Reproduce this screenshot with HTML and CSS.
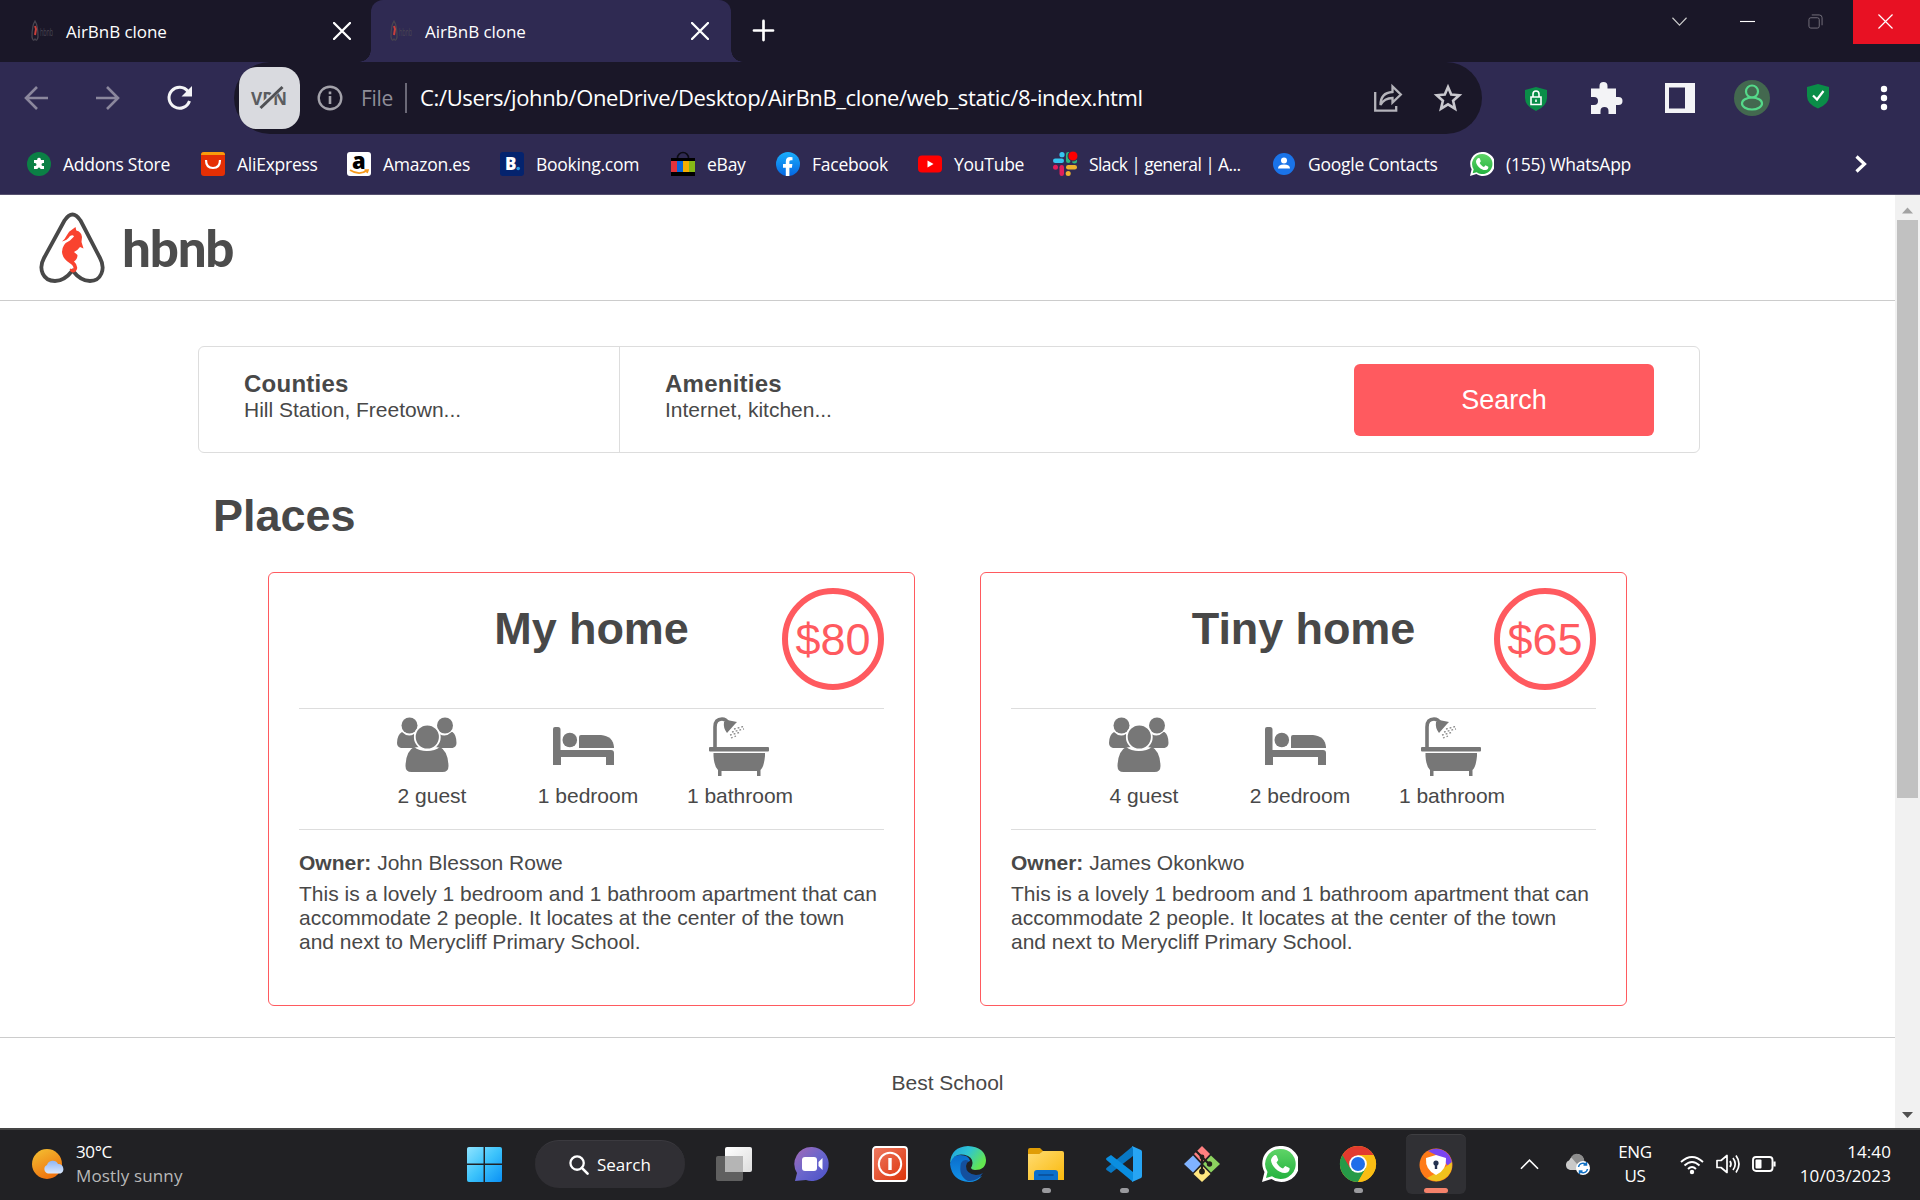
FILE: index.html
```html
<!DOCTYPE html>
<html lang="en">
<head>
<meta charset="utf-8">
<title>AirBnB clone</title>
<link rel="stylesheet" href="styles.css">
</head>
<body>
<svg class="defs" width="0" height="0">
  <defs>
    <linearGradient id="win" x1="0" y1="0" x2="1" y2="1"><stop offset="0" stop-color="#8fe4ff"/><stop offset=".5" stop-color="#3cc3fb"/><stop offset="1" stop-color="#0a90f5"/></linearGradient>
    <linearGradient id="sun" x1=".2" y1="0" x2=".7" y2="1"><stop offset="0" stop-color="#f3bc30"/><stop offset="1" stop-color="#ee6d0c"/></linearGradient>
    <linearGradient id="cloud" x1="0" y1="0" x2="0" y2="1"><stop offset="0" stop-color="#8fb6f5"/><stop offset="1" stop-color="#dbe8fc"/></linearGradient>
    <linearGradient id="sheet" x1="0" y1="0" x2="1" y2="1"><stop offset="0" stop-color="#fff"/><stop offset="1" stop-color="#ddd"/></linearGradient>
    <linearGradient id="chat" x1="0" y1="0" x2="1" y2="1"><stop offset="0" stop-color="#a569b5"/><stop offset=".5" stop-color="#6a66cc"/><stop offset="1" stop-color="#4a50c8"/></linearGradient>
    <linearGradient id="red" x1="0" y1="0" x2="1" y2="1"><stop offset="0" stop-color="#ee7a62"/><stop offset="1" stop-color="#dd3208"/></linearGradient>
    <linearGradient id="edgeTop" x1="0" y1="0" x2="1" y2=".5"><stop offset="0" stop-color="#1d9fe0"/><stop offset=".5" stop-color="#2fc4d2"/><stop offset="1" stop-color="#63e650"/></linearGradient>
    <linearGradient id="edgeBot" x1="0" y1="0" x2="0" y2="1"><stop offset="0" stop-color="#0a6ccb"/><stop offset="1" stop-color="#1292e8"/></linearGradient>
    <linearGradient id="folder" x1="0" y1="0" x2="1" y2="1"><stop offset="0" stop-color="#ffdc72"/><stop offset="1" stop-color="#fab90c"/></linearGradient>
    <linearGradient id="fb" x1="0" y1="0" x2="0" y2="1"><stop offset="0" stop-color="#1aaefc"/><stop offset="1" stop-color="#0566e2"/></linearGradient>
    <linearGradient id="wa" x1="0" y1="0" x2="0" y2="1"><stop offset="0" stop-color="#5fd467"/><stop offset="1" stop-color="#24b23f"/></linearGradient>

    <symbol id="fav" viewBox="0 0 22 22"><path d="M4 1C2 4 1 10 1 17q1 5 3 2q2 3 3-2C7 10 6 4 4 1z" fill="none" stroke="#484550" stroke-width="1.3"/><path d="M4 6l1 3-1 6" stroke="#c9403c" stroke-width="2" fill="none"/><text x="9" y="15.500" font-size="10" textLength="13" lengthAdjust="spacingAndGlyphs" fill="#4a4652">hbnb</text></symbol>
    <symbol id="x" viewBox="0 0 18 18"><path d="M1 1l16 16M17 1L1 17" stroke="#fff" stroke-width="2.300" stroke-linecap="round"/></symbol>
    <symbol id="guests" viewBox="0 0 70 60"><g fill="#777"><circle cx="12.500" cy="8.500" r="8"/><circle cx="48" cy="8.500" r="8"/><path d="M5 15q6 6 12 2 0 8 6 13-4 0-7 1H4q-4-1-4-5 0-8 5-11zM54.500 15q-6 6-12 2 0 8-6 13 4 0 7 1h12q4-1 4-5 0-8-4-11z"/><path d="M17 30q5 4 13 4t13-4q8 4 8.500 19 0 6-6 6h-31q-6 0-6-6Q9 34 17 30z"/></g><circle cx="30.300" cy="20" r="12.500" fill="#777" stroke="#fff" stroke-width="1.800"/></symbol>
    <symbol id="bed" viewBox="0 0 70 60"><g fill="#777"><path d="M0 12q0-2 2-2h3q2.500 0 2.500 2.500V33H58q3 0 3 3v12h-8v-8H8v8H0z"/><circle cx="16.800" cy="23" r="7.300"/><path d="M28 18h20q12 1 13 12v1H26V20q0-2 2-2z"/></g></symbol>
    <symbol id="bath" viewBox="0 0 70 60"><path d="M10 31V10q0-8 7-8 4 0 6 4" fill="none" stroke="#777" stroke-width="3.600"/><g fill="#777"><path d="M19 5l3-2 10 2-2 2-8 9q-4-5-3-11z"/><rect x="4" y="30" width="60" height="4.500" rx="1"/><path d="M8.500 36h51.500v3q-1 11-4.500 14v6h-3.500v-5H16.500v5H13v-6q-4-4-4.500-14z"/></g><path d="M29 12l11-3M27 15l12-3M25 18l11-3M26 21l5-2" stroke="#8a8a8a" stroke-width="1.300" stroke-dasharray="1.800 2"/></symbol>
    <symbol id="whatsapp" viewBox="0 0 36 36"><path d="M18 0A17.500 17.500 0 0 0 2.500 26L0 36l9.500-3A18 18 0 1 0 18 0z" fill="#fff"/><path d="M18 3A15 15 0 0 0 5.500 26L4 32l6-1.800A15 15 0 1 0 18 3z" fill="url(#wa)"/><path d="M12 9.500c2-1 2.500-.5 3.500 2.500l.8 2-1.800 2.500c2 3.500 4 5 6.500 6l2.200-2.500 4.300 2c.5 2-1 5-4.500 5C16 27 9.500 20 9 14.500c0-2 1.500-4 3-5z" fill="#fff"/></symbol>
  </defs>
</svg>

<header class="browser">
  <div class="tabs">
    <div class="tab">
      <svg class="favicon"><use href="#fav"/></svg><span class="tab-title">AirBnB clone</span><svg class="tab-close"><use href="#x"/></svg>
    </div>
    <div class="tab tab-active">
      <svg class="favicon"><use href="#fav"/></svg><span class="tab-title">AirBnB clone</span><svg class="tab-close"><use href="#x"/></svg>
    </div>
    <svg class="new-tab" viewBox="0 0 22 22"><path d="M11 1v20M1 11h20" stroke="#fff" stroke-width="2.800" stroke-linecap="round"/></svg>
    <div class="window-buttons">
      <svg class="win-icon" viewBox="0 0 16 16"><path d="M.5 4L8 12l7.500-8" fill="none" stroke="#ccc" stroke-width="1.200"/></svg>
      <svg class="win-icon" viewBox="0 0 16 16"><path d="M0 8h16" stroke="#fff" stroke-width="1.200"/></svg>
      <svg class="win-icon" viewBox="0 0 16 16"><rect x="1" y="4" width="11" height="11" rx="2" fill="none" stroke="#77747f"/><path d="M4 1h8q3 0 3 3v8" fill="none" stroke="#77747f"/></svg>
      <div class="win-close"><svg class="win-icon" viewBox="0 0 16 16"><path d="M.5.500l15 15M15.500.500l-15 15" stroke="#fff" stroke-width="1.300"/></svg></div>
    </div>
  </div>

  <div class="toolbar">
    <div class="nav">
      <svg viewBox="0 0 24 24"><path d="M24 12H2M13 1L2 12l11 11" fill="none" stroke="#8b879d" stroke-width="2.600"/></svg>
      <svg viewBox="0 0 24 24"><path d="M0 12h22M11 1l11 11-11 11" fill="none" stroke="#8b879d" stroke-width="2.600"/></svg>
      <svg viewBox="0 0 24 24"><path d="M21.500 15A10.500 10.500 0 1 1 20 5.500" fill="none" stroke="#f4f4f6" stroke-width="3"/><path d="M24 0v10.500H13.500z" fill="#f4f4f6"/></svg>
    </div>
    <div class="address">
      <div class="vpn">
        <svg viewBox="0 0 60 62"><text x="11.500" y="37.500" font-size="18" font-weight="700" textLength="36" lengthAdjust="spacingAndGlyphs" fill="#5b5c60">VPN</text><path d="M19 42L42 20" stroke="#d9dadf" stroke-width="5"/><path d="M21 41L43 20" stroke="#505155" stroke-width="3"/></svg>
      </div>
      <svg class="info" viewBox="0 0 26 26"><circle cx="13" cy="13" r="11.300" fill="none" stroke="#a3a2aa" stroke-width="2.400"/><path d="M13 11v8M13 6.500v2.700" stroke="#a3a2aa" stroke-width="2.600"/></svg>
      <span class="scheme">File</span>
      <span class="bar"></span>
      <span class="url">C:/Users/johnb/OneDrive/Desktop/AirBnB_clone/web_static/8-index.html</span>
      <svg class="share" viewBox="0 0 28 28"><path d="M1.200 8v18.600h21V22M6.500 21c0-8 4-12.500 12-13V2.500l8.300 8-8.300 8V14c-5 0-9 1.500-12 7z" fill="none" stroke="#b4b3ba" stroke-width="2.300"/></svg>
      <svg class="star" viewBox="0 0 28 28"><path d="M14 3l3.200 7.600 8 .7-6.100 5.400 1.900 8-7-4.300-7 4.300 1.900-8-6.100-5.400 8-.7z" fill="none" stroke="#c9c8ce" stroke-width="2.600"/></svg>
    </div>
    <div class="extensions">
      <svg viewBox="0 0 36 36"><path d="M18 7l11 3v8q0 8-11 13Q7 26 7 18v-8z" fill="#0a8d48"/><path d="M13 17h10v7.500H13zM15 17v-3a3 3 0 0 1 6 0v3M18 19.500v2.500" fill="none" stroke="#fff" stroke-width="1.600"/></svg>
      <svg viewBox="0 0 36 36"><path d="M2 8.500h8.500V6a4 4 0 0 1 8 0v2.500H27V17h2.500a4 4 0 0 1 0 8H27v9h-7.500v-3a4 4 0 0 0-8 0v3H2v-9h3a4 4 0 0 0 0-8H2z" fill="#f3f3f6"/></svg>
      <svg viewBox="0 0 36 36"><path d="M3 3h30v30H3zM7 7.500v21h16v-21z" fill="#f3f3f6" fill-rule="evenodd"/></svg>
      <svg viewBox="0 0 36 36"><circle cx="18" cy="18" r="18" fill="#43684f"/><circle cx="18" cy="11.500" r="6" fill="none" stroke="#55d98a" stroke-width="2.200"/><ellipse cx="18" cy="23.500" rx="10" ry="6" fill="none" stroke="#55d98a" stroke-width="2.200"/></svg>
      <svg viewBox="0 0 36 36"><path d="M18 4l11 3v9q0 8-11 12.500Q7 24 7 16V7z" fill="#0a8d48"/><path d="M13 15.500l4 4 6.500-8.500" fill="none" stroke="#fff" stroke-width="2.200"/></svg>
      <svg viewBox="0 0 36 36"><g fill="#fff"><circle cx="18" cy="9" r="3.200"/><circle cx="18" cy="18" r="3.200"/><circle cx="18" cy="27" r="3.200"/></g></svg>
    </div>
  </div>

  <div class="bookmarks">
    <span class="bookmark"><svg viewBox="0 0 24 24"><circle cx="12" cy="12" r="12" fill="#0b8045"/><path d="M7 8h3.200V7a2 2 0 0 1 3.600 0v1H17v3h-1a1.500 1.500 0 0 0 0 3h1v3h-3.500a1.500 1.500 0 0 0-3 0H7v-3h1a1.500 1.500 0 0 0 0-3H7z" fill="#fff"/></svg>Addons Store</span>
    <span class="bookmark"><svg viewBox="0 0 24 24"><rect width="24" height="24" rx="3" fill="#e52f04"/><path d="M0 3V3q0-3 3-3h18q3 0 3 3z" fill="#f99c0c"/><path d="M5 8q0 8 7 8t7-8" fill="none" stroke="#fff" stroke-width="2.200"/></svg>AliExpress</span>
    <span class="bookmark"><svg viewBox="0 0 24 24"><rect width="24" height="24" rx="3" fill="#fff"/><text x="5" y="16.500" font-size="22" font-weight="800" fill="#000">a</text><path d="M3 18q9 6 17 .5M17.500 18h3.500l-1 3" fill="none" stroke="#f79a1c" stroke-width="1.700"/></svg>Amazon.es</span>
    <span class="bookmark"><svg viewBox="0 0 24 24"><rect width="24" height="24" rx="3" fill="#04236e"/><text x="5" y="18" font-size="17" font-weight="800" fill="#fff">B</text><circle cx="18.200" cy="16.500" r="1.800" fill="#2a9be6"/></svg>Booking.com</span>
    <span class="bookmark"><svg viewBox="0 0 24 24"><path d="M6.500 8V6a5 5 0 0 1 11 0v2" fill="none" stroke="#0c0b14" stroke-width="1.600"/><path d="M0 6h24v18H0z" fill="#000"/><path d="M0 9h6v11H0z" fill="#e5323a"/><path d="M6 9h6v11H6z" fill="#0a65d8"/><path d="M12 9h6v11h-6z" fill="#f5af02"/><path d="M18 9h6v11h-6z" fill="#86b817"/></svg>eBay</span>
    <span class="bookmark"><svg viewBox="0 0 24 24"><circle cx="12" cy="12" r="12" fill="url(#fb)"/><path d="M9.800 24v-8.300H7V12h2.800V9.500C9.800 6.300 11.500 5 14 5l2.500.2v3.100H15c-1.300 0-1.600.7-1.600 1.700v2h3l-.5 3.700h-2.500V24z" fill="#fff"/></svg>Facebook</span>
    <span class="bookmark"><svg viewBox="0 0 24 24"><rect y="3.500" width="24" height="17" rx="4" fill="#f00"/><path d="M9.500 8.500v7l6-3.500z" fill="#fff"/></svg>YouTube</span>
    <span class="bookmark tight"><svg viewBox="0 0 24 24"><g fill="#36c5f0"><rect y="6.500" width="11" height="4.500" rx="2.200"/><circle cx="9" cy="2.700" r="2.600"/></g><g fill="#2eb67d"><rect x="13" width="4.500" height="11" rx="2.200"/><circle cx="21.500" cy="9" r="2.500"/></g><g fill="#ecb22e"><rect x="13" y="13" width="11" height="4.500" rx="2.200"/><circle cx="15.200" cy="21.500" r="2.500"/></g><g fill="#e01e5a"><rect x="6.500" y="13" width="4.500" height="11" rx="2.200"/><circle cx="2.500" cy="15.200" r="2.500"/></g><circle cx="20" cy="4" r="5" fill="#f00" stroke="#2f2a52"/></svg>Slack | general | A...</span>
    <span class="bookmark"><svg viewBox="0 0 24 24"><circle cx="12" cy="12" r="11" fill="#1a73e8"/><circle cx="12" cy="8.500" r="3" fill="#fff"/><path d="M6 16.500q0-4 6-4t6 4z" fill="#fff"/></svg>Google Contacts</span>
    <span class="bookmark"><svg><use href="#whatsapp"/></svg>(155) WhatsApp</span>
    <svg class="more" viewBox="0 0 12 18"><path d="M1.500 1.500L9.500 9l-8 7.500" fill="none" stroke="#fff" stroke-width="3.200"/></svg>
  </div>
</header>

<div class="viewport">
  <div class="page">
    <header class="site-header">
      <svg class="logo-mark" viewBox="0 0 66 72"><path d="M25.500 8.500Q33.500-3.500 41.500 8.500L61 46C67 57 62 69 51 69 43 69 37 63 33.500 58.500 30 63 24 69 16 69 4 69-1 57 5 46z" fill="none" stroke="#484848" stroke-width="3.800" stroke-linejoin="round"/><path d="M36.500 15l.8 3.500q5 1 5.700 6.500l-.5 5 2 6.500-3.500-1.500q-2 3-6 5l3.500 3q0 4-3.500 6.500 4 3.500 3 7.500-1.500 4-4.500 3.500-3.500-1-2.500-4 3 1.500 3.500-.5 0-2.500-4-5-7-4.500-7.500-11 0-8 8-11.500l4-4q-1-2-4-.5-3 4.500-8 5.500 3-2.500 5-6.500 2-4 4.500-5z" fill="#f9432f"/></svg>
      <span class="logo-word">hbnb</span>
    </header>
    <main class="container">
      <section class="filters">
        <div class="filter filter-counties"><h3>Counties</h3><h4>Hill Station, Freetown...</h4></div>
        <div class="filter"><h3>Amenities</h3><h4>Internet, kitchen...</h4></div>
        <button class="search" type="button">Search</button>
      </section>
      <h1 class="places-title">Places</h1>
      <section class="places">
        <article class="place">
          <div class="place-head"><h2>My home</h2><div class="price">$80</div></div>
          <div class="facts">
            <div><svg><use href="#guests"/></svg>2 guest</div>
            <div><svg><use href="#bed"/></svg>1 bedroom</div>
            <div><svg><use href="#bath"/></svg>1 bathroom</div>
          </div>
          <p class="owner"><b>Owner:</b> John Blesson Rowe</p>
          <p class="description">This is a lovely 1 bedroom and 1 bathroom apartment that can accommodate 2 people. It locates at the center of the town and next to Merycliff Primary School.</p>
        </article>
        <article class="place">
          <div class="place-head"><h2>Tiny home</h2><div class="price">$65</div></div>
          <div class="facts">
            <div><svg><use href="#guests"/></svg>4 guest</div>
            <div><svg><use href="#bed"/></svg>2 bedroom</div>
            <div><svg><use href="#bath"/></svg>1 bathroom</div>
          </div>
          <p class="owner"><b>Owner:</b> James Okonkwo</p>
          <p class="description">This is a lovely 1 bedroom and 1 bathroom apartment that can accommodate 2 people. It locates at the center of the town and next to Merycliff Primary School.</p>
        </article>
      </section>
    </main>
    <footer class="site-footer">Best School</footer>
  </div>
  <div class="scrollbar">
    <svg viewBox="0 0 25 25"><path d="M7 18.500h11l-5.500-6z" fill="#a3a3a3"/></svg>
    <div class="thumb"></div>
    <svg class="scroll-down" viewBox="0 0 25 25"><path d="M7 9h11l-5.500 6z" fill="#505050"/></svg>
  </div>
</div>

<footer class="taskbar">
  <div class="weather">
    <svg viewBox="0 0 34 32"><circle cx="15" cy="15" r="15" fill="url(#sun)"/><path d="M16 24.500a4.500 4.500 0 0 1-1-8.500 6 6 0 0 1 11-1 5 5 0 0 1 2.500 9.500z" fill="url(#cloud)"/></svg>
    <div class="weather-text"><span>30°C</span><span class="muted">Mostly sunny</span></div>
  </div>
  <svg class="start" viewBox="0 0 36 36"><g fill="url(#win)"><path d="M0 2q0-2 2-2h15v17H0zM18.500 0H34q2 0 2 2v15H18.500zM0 18.500h17V36H2q-2 0-2-2zM18.500 18.500H36V34q0 2-2 2H18.500z"/></g></svg>
  <div class="task-search"><svg viewBox="0 0 21 21"><circle cx="8.500" cy="8.500" r="7" fill="none" stroke="#fff" stroke-width="2.400"/><path d="M13.500 13.500l6 6" stroke="#fff" stroke-width="2.800" stroke-linecap="round"/></svg>Search</div>
  <div class="apps">
    <div class="app"><svg viewBox="0 0 36 36"><rect x="9" y="1" width="27" height="25" rx="2" fill="url(#sheet)"/><rect y="10" width="27" height="25" rx="2" fill="#606060"/><path d="M9 10h18v16H9z" fill="#b5b5b5"/></svg></div>
    <div class="app"><svg viewBox="0 0 36 36"><path d="M18 1a17 17 0 1 1-6 33l-11 1 2-8A17 17 0 0 1 18 1z" fill="url(#chat)"/><rect x="8" y="11" width="15" height="14" rx="3" fill="#fff"/><path d="M24.500 16l4-4v12l-4-4z" fill="#fff"/></svg></div>
    <div class="app"><svg viewBox="0 0 36 36"><rect x="1" y="1" width="34" height="34" rx="3" fill="url(#red)" stroke="#fff" stroke-width="1.800"/><circle cx="18" cy="18" r="11.200" fill="none" stroke="#fff" stroke-width="2"/><path d="M18 12v12" stroke="#fff" stroke-width="3.400"/></svg></div>
    <div class="app"><svg viewBox="0 0 36 36"><path d="M0 18Q1 9 10 9q9 0 10 6-6 1-6 8 1 11 13 9l5-2Q27 36 19 36 2 35 0 18z" fill="url(#edgeBot)"/><path d="M11 17q-3 13 7 18 9 1 15-8-3 2-7 2-10-1-10-9 0-3 3-5-5-3-8 2z" fill="#14509e"/><path d="M0 17Q1 1 18 0q17 1 18 14 0 10-11 10-6-1-3-4 2-7-4-10Q5 5 0 17z" fill="url(#edgeTop)"/></svg></div>
    <div class="app app-open"><svg viewBox="0 0 36 36"><path d="M0 4q0-2 2-2h10l4 4h-2L10 9H0z" fill="#e09d05"/><path d="M0 8h11l4-3h19q2 0 2 2v27H0z" fill="url(#folder)"/><path d="M6 34V27q0-3 3-3h18q3 0 3 3v7z" fill="#0c6fcb"/><path d="M11 29h14" stroke="#0a4c94" stroke-width="1.600" stroke-linecap="round"/></svg></div>
    <div class="app app-open"><svg viewBox="0 0 36 36"><path d="M27 0v10L5 27l-4.500-3q-1-1 0-2z" fill="#0878c4"/><path d="M27 36V26L5 9l-4.500 3q-1 1 0 2z" fill="#0a8ee0"/><path d="M26 0l9 4q1 .5 1 2v24q0 1.500-1 2l-9 4 1-3V3z" fill="#27a5f4"/></svg></div>
    <div class="app"><svg viewBox="0 0 36 36"><path d="M18 0l8 8-8 8.500L10 8z" fill="#ff8080"/><path d="M9 9.500l8 8.500-8 8.500L0 18z" fill="#80b3ff"/><path d="M27 9.500l9 8.500-9 8.500-8-8.500z" fill="#8dd35f"/><path d="M18 19.500l8.500 8.500-8.500 8-8.500-8z" fill="#ffe680"/><path d="M12 5l6 6v15M18 11l7 7" fill="none" stroke="#241f1c" stroke-width="2.200"/><circle cx="18" cy="11" r="2.400" fill="#241f1c"/><circle cx="25.500" cy="18" r="2.700" fill="#241f1c"/><circle cx="18" cy="25.500" r="2.900" fill="#241f1c"/></svg></div>
    <div class="app"><svg><use href="#whatsapp"/></svg></div>
    <div class="app app-open"><svg viewBox="0 0 36 36"><circle cx="18" cy="18" r="18" fill="#fabd14"/><path d="M18 18L2.400 9A18 18 0 0 0 18 36l8-14z" fill="#269a48"/><path d="M2.400 9A18 18 0 0 1 33.600 9H18l-8 13z" fill="#e23a2e"/><path d="M18 9h15.600A18 18 0 0 1 18 36l8-14z" fill="#fabd14"/><circle cx="18" cy="18" r="8.800" fill="#fff"/><circle cx="18" cy="18" r="7" fill="#1f6eea"/></svg></div>
    <div class="app app-current"><svg viewBox="0 0 36 36"><circle cx="18" cy="18" r="16.500" fill="#ff7a18"/><path d="M10 4Q22-2 31 8q5 8 2 15L24 11z" fill="#7a45f2"/><path d="M34 15q1 12-8 17-9 5-17-1l13-7z" fill="#f0c21c"/><path d="M18 8l10 3q1 12-10 17Q7 23 8 11z" fill="#fff"/><circle cx="18" cy="16" r="2.600" fill="#243150"/><path d="M16.800 16h2.400v6h-2.400z" fill="#243150"/></svg></div>
  </div>
  <div class="tray">
    <svg class="tray-up" viewBox="0 0 20 11"><path d="M1 10l9-9 9 9" fill="none" stroke="#fff" stroke-width="1.700"/></svg>
    <svg class="tray-cloud" viewBox="0 0 25 22"><path d="M5 17a5 5 0 0 1-1-9.500Q8 1 13 1q5 1 6 6l1 10z" fill="#c9c9c9"/><path d="M6 4q3-4 7-3 6 1 6.500 8L12 11z" fill="#8d8d8d"/><circle cx="18" cy="15" r="7" fill="#fff"/><path d="M13.500 14a4.500 4.500 0 0 1 8-2M22.500 16a4.500 4.500 0 0 1-8 2M21.500 9v3h-3M14.500 21v-3h3" fill="none" stroke="#1170c4" stroke-width="1.500"/></svg>
    <div class="language"><span>ENG</span><span>US</span></div>
    <svg class="tray-icon" viewBox="0 0 24 24"><path d="M1 10q11-10 22 0M4.500 13.500q7.500-7 15 0M8 17q4-4 8 0" fill="none" stroke="#fff" stroke-width="1.900"/><circle cx="12" cy="20" r="2.200" fill="#fff"/></svg>
    <svg class="tray-icon" viewBox="0 0 24 24"><path d="M1 8.500h4l6-5v17l-6-5H1z" fill="none" stroke="#fff" stroke-width="1.700" stroke-linejoin="round"/><path d="M14 9q2 3 0 6M17 6q4.500 6 0 12M20 3.500q6 8.500 0 17" fill="none" stroke="#fff" stroke-width="1.700"/></svg>
    <svg class="tray-icon" viewBox="0 0 24 24"><rect x="1" y="5" width="19.500" height="14" rx="3" fill="none" stroke="#fff" stroke-width="1.900"/><rect x="3.500" y="7.500" width="6" height="9" rx="1" fill="#fff"/><path d="M22.500 9.500v5" stroke="#fff" stroke-width="2.200"/></svg>
    <div class="clock"><span>14:40</span><span>10/03/2023</span></div>
  </div>
</footer>
</body>
</html>
```

FILE: styles.css
```css
* { box-sizing: border-box; margin: 0; padding: 0; }

body {
  width: 1920px;
  height: 1200px;
  overflow: hidden;
  display: flex;
  flex-direction: column;
  font-family: "Open Sans", "Noto Sans", sans-serif;
  background: #fff;
}

svg { display: block; flex: none; overflow: visible; }
.defs { position: absolute; }

/* Browser chrome */
.browser { height: 195px; background: #2f2a52; border-bottom: 1px solid #56516f; flex: none; color: #fff; }

.tabs { display: flex; height: 62px; background: #1a1728; }
.tab { width: 371px; padding: 0 20px 0 31px; display: flex; align-items: center; font-size: 17px; letter-spacing: -0.05px; }
.tab-active { width: 360px; padding: 0 22px 0 19px; background: #2f2a52; border-radius: 12px 12px 0 0; position: relative; }
.tab-active::before, .tab-active::after {
  content: ""; position: absolute; bottom: 0; width: 12px; height: 12px;
}
.tab-active::before { left: -12px; background: radial-gradient(circle at 0 0, transparent 11.5px, #2f2a52 12px); }
.tab-active::after { right: -12px; background: radial-gradient(circle at 100% 0, transparent 11.5px, #2f2a52 12px); }
.favicon { width: 22px; height: 22px; margin-right: 13px; }
.tab-close { width: 18px; height: 18px; margin-left: auto; }
.new-tab { width: 21px; height: 21px; margin: 20px 0 0 22px; }
.window-buttons { margin-left: auto; display: flex; gap: 53px; align-items: flex-start; }
.win-icon { width: 15px; height: 15px; margin-top: 14px; }
.win-close { width: 67px; height: 44px; margin-left: -23px; background: #e81123; display: flex; justify-content: center; padding-right: 2px; }

.toolbar { display: flex; height: 72px; align-items: center; }
.nav { display: flex; gap: 48px; width: 234px; padding-left: 24px; }
.nav svg { width: 24px; height: 24px; }
.address { width: 1248px; height: 72px; border-radius: 36px; background: #1a1728; display: flex; align-items: center; font-size: 22px; }
.vpn { width: 61px; height: 62px; margin-left: 5px; border-radius: 18px; background: #d9dadf; }
.vpn svg { width: 61px; height: 62px; }
.info { width: 26px; height: 26px; margin-left: 17px; }
.scheme { width: 44px; margin-left: 18px; padding-bottom: 1px; color: #8f8d98; font-size: 21px; letter-spacing: -0.3px; }
.bar { width: 2px; height: 30px; background: #6b6977; }
.url { width: 940px; margin-left: 13px; padding-bottom: 2px; letter-spacing: -0.35px; white-space: nowrap; }
.share { width: 28px; height: 28px; margin-left: 14px; }
.star { width: 28px; height: 28px; margin-left: 32px; }
.extensions { display: grid; grid-template-columns: 71px 73px 72px 66px 66px 36px; margin-left: 36px; }
.extensions svg { width: 36px; height: 36px; }

.bookmarks {
  display: grid;
  grid-template-columns: 174px 146px 153px 171px 105px 142px 135px 219px 198px 385px 12px;
  height: 60px;
  padding-left: 27px;
  align-items: center;
}
.bookmark { display: flex; align-items: center; gap: 12px; font-size: 17.5px; letter-spacing: -0.25px; white-space: nowrap; }
.bookmark.tight { letter-spacing: -0.6px; }
.bookmark svg { width: 24px; height: 24px; }
.more { width: 12px; height: 18px; }

/* Page */
.viewport { display: flex; height: 933px; flex: none; font-family: "Liberation Sans", Arial, sans-serif; color: #484848; }
.page { width: 1895px; font-size: 21px; line-height: 24px; }
.site-header { display: flex; height: 106px; border-bottom: 1px solid #ccc; padding: 17px 0 0 39px; }
.logo-mark { width: 66px; height: 72px; }
.logo-word { margin: 4px 0 0 17px; font: 900 51px/64px Lato, sans-serif; letter-spacing: -1.2px; color: #4c4c4c; }

.container { width: 1502px; margin-left: 198px; padding-top: 45px; }
.filters { display: flex; height: 107px; border: 1px solid #ddd; border-radius: 6px; padding-right: 45px; }
.filter { padding: 23px 0 0 45px; }
.filter-counties { width: 421px; border-right: 1px solid #ddd; }
.filter h3 { font-size: 24px; line-height: 28px; letter-spacing: 0.25px; }
.filter h4 { font-size: 21px; line-height: 24px; font-weight: 400; }
.search { width: 300px; height: 72px; margin: 17px 0 0 auto; border: 0; border-radius: 6px; background: #ff5a5f; color: #fff; font: 27px/70px "Liberation Sans", Arial, sans-serif; }
.places-title { font-size: 45px; line-height: 52px; margin: 37px 0 0 15px; }

.places { display: flex; gap: 65px; padding-left: 70px; margin-top: 30px; }
.place { width: 647px; height: 434px; border: 1px solid #ff5a5f; border-radius: 6px; padding: 15px 30px; }
.place-head { display: flex; justify-content: center; height: 121px; border-bottom: 1px solid #ddd; position: relative; }
.place-head h2 { font-size: 45px; line-height: 52px; margin-top: 15px; letter-spacing: -0.1px; }
.price { position: absolute; top: 0; right: 0; width: 102px; height: 102px; border: 6px solid #ff5a5f; border-radius: 50%; color: #ff5a5f; font-size: 45px; line-height: 91px; text-align: center; }
.facts { display: grid; grid-template-columns: 156px 156px 148px; height: 121px; padding: 8px 0 0 55px; border-bottom: 1px solid #ddd; text-align: center; }
.facts svg { width: 70px; height: 60px; margin: 0 auto 7px; }
.owner { margin-top: 21px; }
.description { margin-top: 7px; }
.site-footer { height: 91px; margin-top: 31px; border-top: 1px solid #ccc; text-align: center; line-height: 89px; }

.scrollbar { width: 25px; background: #f1f1f1; display: flex; flex-direction: column; align-items: center; }
.scrollbar svg { width: 25px; height: 25px; }
.thumb { width: 21px; height: 578px; background: #c1c1c1; }
.scroll-down { margin-top: auto; }

/* Taskbar */
.taskbar { height: 72px; flex: none; border-top: 2px solid #454545; background: #212124; display: flex; align-items: center; padding-bottom: 2px; color: #fff; font-size: 17px; letter-spacing: -0.4px; }
.weather { display: flex; width: 467px; padding-left: 32px; gap: 10px; }
.weather svg { width: 34px; height: 32px; margin-top: 9px; }
.weather-text, .language, .clock { display: flex; flex-direction: column; line-height: 24px; }
.muted { color: #b9b9b9; letter-spacing: 0.15px; }
.start { width: 35px; height: 35px; }
.task-search { width: 150px; height: 48px; margin-left: 33px; padding-left: 34px; border-radius: 24px; background: #302f34; border-top: 1px solid #3b3a3f; display: flex; align-items: center; gap: 8px; letter-spacing: 0; }
.task-search svg { width: 20px; height: 20px; }
.apps { display: flex; gap: 18px; margin-left: 19px; }
.app { width: 60px; height: 60px; padding: 12px; border-radius: 6px; position: relative; }
.app svg { width: 36px; height: 36px; }
.app-open::after, .app-current::after { content: ""; position: absolute; bottom: 1px; left: 26px; width: 9px; height: 5px; border-radius: 3px; background: #9a9a9e; }
.app-current { background: #303034; border-top: 1px solid #3f3f42; }
.app-current::after { left: 18px; width: 24px; background: #f5826b; }
.tray { display: flex; align-items: center; margin-left: 54px; width: 371px; }
.tray-up { width: 19px; height: 11px; }
.tray-cloud { width: 25px; height: 22px; margin-left: 26px; }
.language { width: 50px; margin-left: 20px; text-align: center; }
.tray-icon { width: 24px; height: 24px; margin-left: 12px; }
.language + .tray-icon { margin-left: 20px; }
.clock { margin-left: auto; text-align: right; letter-spacing: 0.1px; }
```
